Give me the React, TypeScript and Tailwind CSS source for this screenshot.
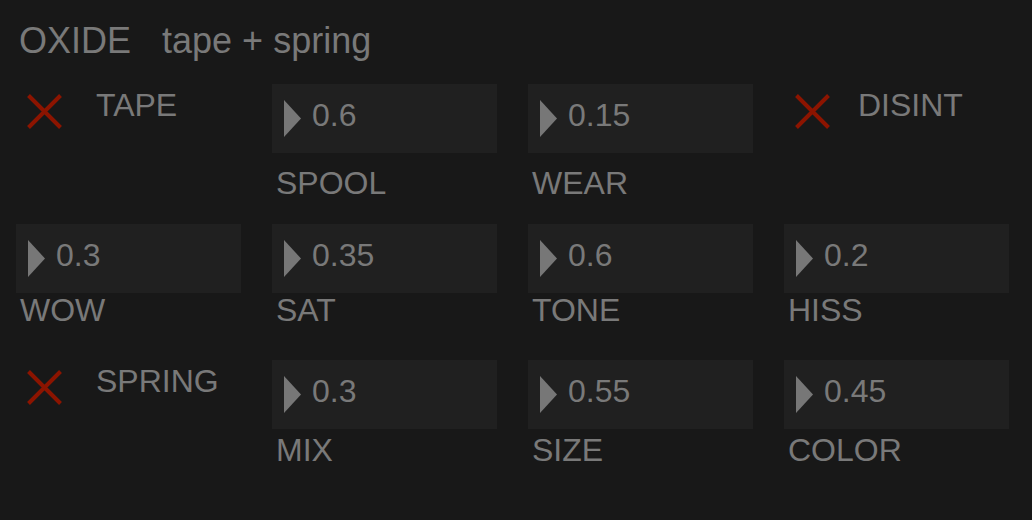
import React from 'react';

type Cell =
  | { kind: 'toggle'; label: string; gap: number }
  | { kind: 'knob'; label: string; value: string }
  | { kind: 'empty' };

const rows: { cells: Cell[]; labelGap: string; top: string }[] = [
  {
    top: 'mt-[25px]',
    labelGap: 'mt-[14px]',
    cells: [
      { kind: 'toggle', label: 'TAPE', gap: 34 },
      { kind: 'knob', label: 'SPOOL', value: '0.6' },
      { kind: 'knob', label: 'WEAR', value: '0.15' },
      { kind: 'toggle', label: 'DISINT', gap: 28 },
    ],
  },
  {
    top: 'mt-[25px]',
    labelGap: 'mt-[1px]',
    cells: [
      { kind: 'knob', label: 'WOW', value: '0.3' },
      { kind: 'knob', label: 'SAT', value: '0.35' },
      { kind: 'knob', label: 'TONE', value: '0.6' },
      { kind: 'knob', label: 'HISS', value: '0.2' },
    ],
  },
  {
    top: 'mt-[34px]',
    labelGap: 'mt-[5px]',
    cells: [
      { kind: 'toggle', label: 'SPRING', gap: 34 },
      { kind: 'knob', label: 'MIX', value: '0.3' },
      { kind: 'knob', label: 'SIZE', value: '0.55' },
      { kind: 'knob', label: 'COLOR', value: '0.45' },
    ],
  },
];

function Cross() {
  return (
    <svg width="35" height="35" viewBox="0 0 35 35" className="shrink-0">
      <path d="M1.5 1.5 L33.5 33.5 M33.5 1.5 L1.5 33.5" stroke="#8c1400" strokeWidth="4" />
    </svg>
  );
}

function Toggle({ label, gap }: { label: string; gap: number }) {
  return (
    <div className="flex items-start pl-[11px]">
      <div className="mt-[10px]">
        <Cross />
      </div>
      <span
        className="mt-[5px] text-[32px] leading-none"
        style={{ marginLeft: gap }}
      >
        {label}
      </span>
    </div>
  );
}

function Knob({ label, value, labelGap }: { label: string; value: string; labelGap: string }) {
  return (
    <div className="flex flex-col">
      <div className="flex h-[69px] w-[225px] items-center bg-[#202020]">
        <svg width="17" height="37" viewBox="0 0 17 37" className="ml-[12px] shrink-0">
          <path d="M0 0 L17 18.5 L0 37 Z" fill="#777777" />
        </svg>
        <span className="ml-[11px] self-start pt-[15px] text-[32px] leading-none">{value}</span>
      </div>
      <span className={`${labelGap} pl-[4px] text-[32px] leading-none`}>{label}</span>
    </div>
  );
}

export default function App() {
  return (
    <div
      className="flex h-[520px] w-[1032px] flex-col overflow-hidden bg-[#181818] text-[#797979]"
      style={{ fontFamily: '"Liberation Sans", Arial, sans-serif' }}
    >
      <div className="mt-[23px] flex items-start gap-[31px] pl-[19px] text-[36px] leading-none">
        <span>OXIDE</span>
        <span>tape + spring</span>
      </div>

      <div className="flex flex-col pl-[16px]">
        {rows.map((row, i) => (
          <div key={i} className={`${row.top} grid grid-cols-[256px_256px_256px_256px] items-start`}>
            {row.cells.map((cell, j) =>
              cell.kind === 'toggle' ? (
                <Toggle key={j} label={cell.label} gap={cell.gap} />
              ) : cell.kind === 'knob' ? (
                <Knob key={j} label={cell.label} value={cell.value} labelGap={row.labelGap} />
              ) : (
                <div key={j} />
              )
            )}
          </div>
        ))}
      </div>
    </div>
  );
}
